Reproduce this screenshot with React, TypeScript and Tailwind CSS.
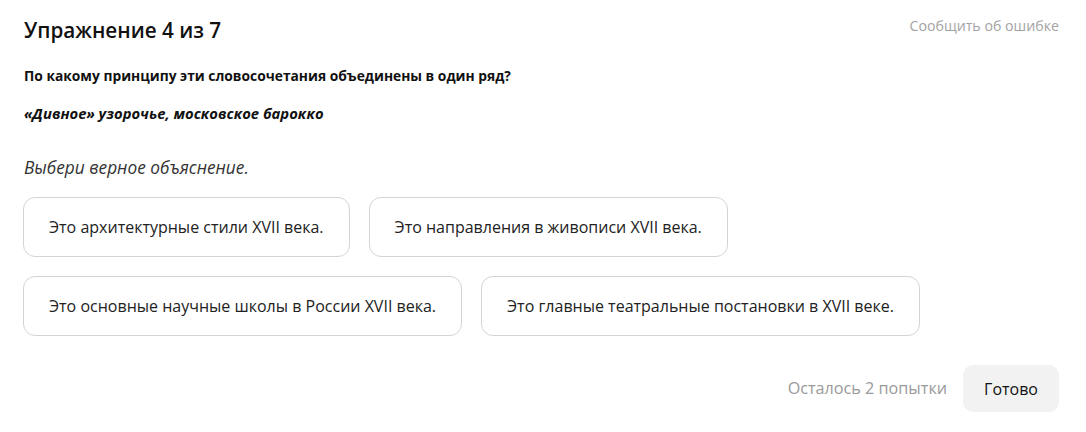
const options = [
  ["Это архитектурные стили XVII века.", "Это направления в живописи XVII века."],
  [
    "Это основные научные школы в России XVII века.",
    "Это главные театральные постановки в XVII веке.",
  ],
];

export default function App() {
  return (
    <div
      className="w-[1086px] h-[432px] bg-white text-[#111] pl-6 pr-[27px] pt-[14px]"
      style={{ fontFamily: '"Open Sans", "Noto Sans", sans-serif' }}
    >
      <div className="flex items-start justify-between">
        <h1 className="text-[20.7px] font-semibold leading-[32px]">
          Упражнение 4 из 7
        </h1>
        <a className="text-[14.2px] text-[#a3a3a3] leading-[24px] cursor-pointer">
          Сообщить об ошибке
        </a>
      </div>

      <p className="mt-[19px] text-[13.8px] font-bold leading-[22px]">
        По какому принципу эти словосочетания объединены в один ряд?
      </p>
      <p className="mt-[15px] text-[14.8px] font-bold italic leading-[22px]">
        «Дивное» узорочье, московское барокко
      </p>

      <p className="mt-[32px] text-[17.3px] italic text-[#333] leading-[24px]">
        Выбери верное объяснение.
      </p>

      <div className="mt-[17px] flex flex-col gap-[19px] -ml-px">
        {options.map((row, i) => (
          <div key={i} className="flex gap-[19px]">
            {row.map((text) => (
              <button
                key={text}
                className="h-[60px] px-[25px] rounded-[12px] border border-[#d4d4d4] bg-white text-[16px] text-[#222] leading-none"
              >
                {text}
              </button>
            ))}
          </div>
        ))}
      </div>

      <div className="mt-[29px] flex items-center justify-end gap-4">
        <span className="text-[16.2px] text-[#9a9a9a]">Осталось 2 попытки</span>
        <button className="h-[47px] px-[21px] rounded-[10px] bg-[#f2f2f2] text-[16px] text-[#111]">
          Готово
        </button>
      </div>
    </div>
  );
}
